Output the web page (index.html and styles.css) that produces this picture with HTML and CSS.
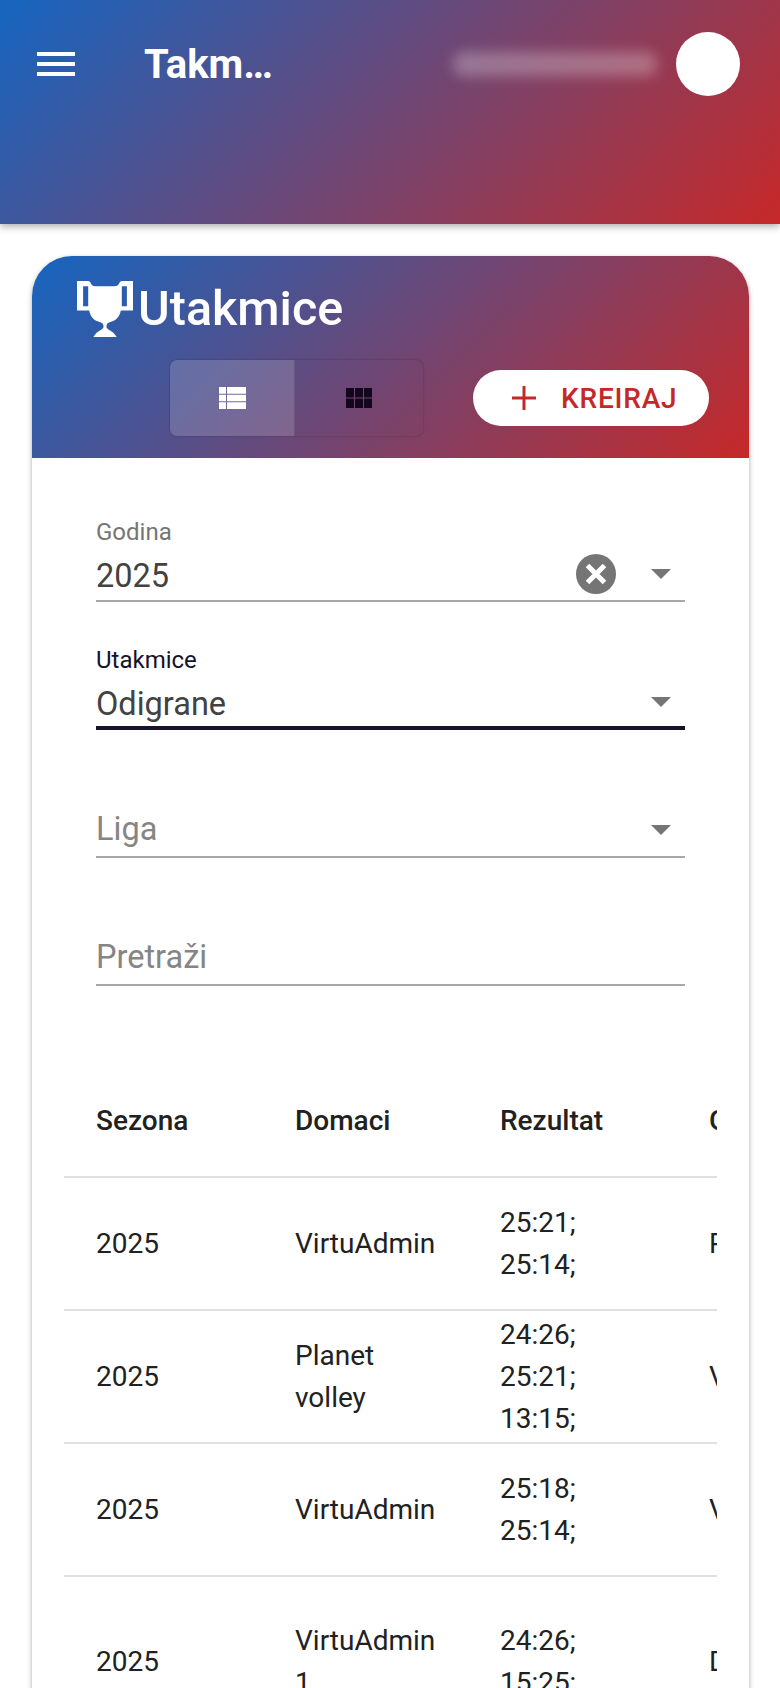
FILE: index.html
```html
<!DOCTYPE html>
<html lang="sr">
<head>
  <meta charset="UTF-8">
  <meta name="viewport" content="width=device-width, initial-scale=1.0">
  <title>Utakmice</title>
  <link rel="stylesheet" href="styles.css">
</head>
<body>
  <header class="topbar">
    <button class="menu-button" aria-label="Meni">
      <span></span><span></span><span></span>
    </button>
    <div class="topbar-title">Takm…</div>
    <div class="user-name"></div>
    <div class="avatar"></div>
  </header>

  <main class="page">
    <section class="card">
      <div class="card-head">
        <h1 class="card-title">
          <svg class="trophy" viewBox="0 0 55 53" preserveAspectRatio="none" aria-hidden="true">
            <path fill-rule="evenodd" d="M0 0H11Q13 0 14 3Q15 5 18 5H37Q40 5 41 3Q42 0 44 0H55V28H43C42 34 38 38 32 39Q29 40 29 42V44Q30 46 33 47Q37 49 39 53H16Q18 49 22 47Q25 46 26 44V42Q26 40 23 39C17 38 13 34 12 28H0ZM6 5V24H11V5ZM44 5V24H49V5Z"/>
          </svg>
          Utakmice
        </h1>
        <div class="head-actions">
          <div class="view-toggle">
            <button class="toggle-item active" aria-label="Lista">
              <svg viewBox="0 0 27 22" width="27" height="22"><path d="M0 0h7v6.700H0zM8 0h19v6.700H8zM0 7.700h7v6.600H0zM8 7.700h19v6.600H8zM0 15.300h7V22H0zM8 15.300h19V22H8z"/></svg>
            </button>
            <button class="toggle-item" aria-label="Mreža">
              <svg viewBox="0 0 26 20" width="26" height="20"><path d="M0 0h8v9.500H0zM9 0h8v9.500H9zM18 0h8v9.500h-8zM0 10.500h8V20H0zM9 10.500h8V20H9zM18 10.500h8V20h-8z"/></svg>
            </button>
          </div>
          <button class="create-button">
            <svg viewBox="0 0 24 24" width="24" height="24"><path d="M10.500 0h3v10.500H24v3H13.500V24h-3V13.500H0v-3h10.500z"/></svg>
            KREIRAJ
          </button>
        </div>
      </div>

      <div class="card-body">
        <div class="filters">
          <div class="field">
            <label class="field-label">Godina</label>
            <div class="field-row">
              <span class="field-value">2025</span>
              <span class="clear-icon">
                <svg viewBox="0 0 40 40" width="40" height="40"><circle cx="20" cy="20" r="20" fill="#757575"/><path d="M11.500 11.500l17 17m0-17l-17 17" stroke="#fff" stroke-width="5" fill="none"/></svg>
              </span>
              <span class="arrow"></span>
            </div>
          </div>
          <div class="field focused">
            <label class="field-label">Utakmice</label>
            <div class="field-row">
              <span class="field-value">Odigrane</span>
              <span class="arrow"></span>
            </div>
          </div>
          <div class="field">
            <div class="field-row">
              <span class="field-value placeholder">Liga</span>
              <span class="arrow"></span>
            </div>
          </div>
          <div class="field">
            <div class="field-row">
              <span class="field-value placeholder">Pretraži</span>
            </div>
          </div>
        </div>

        <div class="table-wrap">
          <table class="matches">
            <thead>
              <tr>
                <th class="col-season">Sezona</th>
                <th class="col-home">Domaci</th>
                <th class="col-result">Rezultat</th>
                <th>Gosti</th>
              </tr>
            </thead>
            <tbody>
              <tr>
                <td>2025</td>
                <td>VirtuAdmin</td>
                <td>25:21;<br>25:14;</td>
                <td>Partizan</td>
              </tr>
              <tr>
                <td>2025</td>
                <td>Planet<br>volley</td>
                <td>24:26;<br>25:21;<br>13:15;</td>
                <td>VirtuAdmin</td>
              </tr>
              <tr>
                <td>2025</td>
                <td>VirtuAdmin</td>
                <td>25:18;<br>25:14;</td>
                <td>Vizura</td>
              </tr>
              <tr class="tall-row">
                <td>2025</td>
                <td>VirtuAdmin<br>1</td>
                <td>24:26;<br>15:25;</td>
                <td>Dorćol</td>
              </tr>
            </tbody>
          </table>
        </div>
      </div>
    </section>
  </main>
</body>
</html>
```

FILE: styles.css
```css
html, body {
  height: 1688px;
  overflow: hidden;
}

body {
  margin: 0;
  background: #fff;
  font-family: Roboto, "Liberation Sans", sans-serif;
  color: #212121;
}

button {
  border: none;
  padding: 0;
  font-family: inherit;
  cursor: pointer;
}

.topbar {
  display: flex;
  align-items: flex-start;
  height: 224px;
  padding: 32px 40px 0 37px;
  box-sizing: border-box;
  background: linear-gradient(135deg, #1565c0, #c62828);
  box-shadow: 0 3px 7px rgba(0, 0, 0, 0.3);
}

.menu-button {
  display: flex;
  flex-direction: column;
  justify-content: space-between;
  width: 38px;
  height: 24px;
  margin-top: 20px;
  background: none;
}

.menu-button span {
  height: 4px;
  background: #fff;
}

.topbar-title {
  width: 306px;
  margin-left: 69px;
  color: #fff;
  font-size: 40px;
  font-weight: 700;
  line-height: 66px;
}

.user-name {
  width: 204px;
  height: 24px;
  margin: 20px 19px 0 3px;
  border-radius: 10px;
  background: rgba(255, 255, 255, 0.28);
  filter: blur(7px);
}

.avatar {
  width: 64px;
  height: 64px;
  border-radius: 50%;
  background: #fff;
}

.page {
  padding: 32px 31px 0 32px;
}

.card {
  border-radius: 40px 40px 0 0;
  background: #fff;
  box-shadow: 0 2px 5px rgba(0, 0, 0, 0.35);
}

.card-head {
  height: 202px;
  padding-top: 25px;
  box-sizing: border-box;
  border-radius: 40px 40px 0 0;
  background: linear-gradient(135deg, #1565c0, #c62828);
}

.card-title {
  display: flex;
  align-items: center;
  margin: 0 0 0 45px;
  color: #fff;
  font-size: 48.500px;
  font-weight: 500;
  line-height: 56px;
}

.trophy {
  width: 56px;
  height: 56px;
  margin-right: 5px;
  fill: #fff;
}

.head-actions {
  display: flex;
  align-items: flex-start;
  margin: 23px 0 0 138px;
}

.view-toggle {
  display: flex;
  height: 76px;
  border-radius: 7px;
  box-shadow: 0 0 2px rgba(0, 0, 0, 0.3);
}

.toggle-item {
  display: flex;
  align-items: center;
  justify-content: center;
  width: 125px;
  background: transparent;
  fill: #12071c;
}

.toggle-item:first-child {
  border-right: 1px solid rgba(0, 0, 0, 0.15);
  border-radius: 7px 0 0 7px;
}

.toggle-item:last-child {
  width: 128px;
}

.toggle-item.active {
  background: rgba(255, 255, 255, 0.16);
  fill: #fff;
}

.create-button {
  display: flex;
  align-items: center;
  gap: 25px;
  width: 236px;
  height: 56px;
  margin: 10px 0 0 50px;
  padding-left: 39px;
  box-sizing: border-box;
  border-radius: 28px;
  background: #fff;
  color: #c62828;
  fill: #c62828;
  font-size: 28px;
  font-weight: 500;
  letter-spacing: 0.8px;
}

.card-body {
  padding: 16px 32px 0;
}

.filters {
  padding: 0 32px 78px;
}

.field {
  display: flex;
  flex-direction: column;
  justify-content: flex-end;
  height: 128px;
  box-sizing: border-box;
  border-bottom: 2px solid #a8a8a8;
}

.field.focused {
  border-bottom: 4px solid #14132a;
}

.field.focused .field-row {
  margin-bottom: -2px;
}

.field.focused .field-label {
  color: #14132a;
}

.field-label {
  margin-bottom: 1px;
  color: #757575;
  font-size: 24px;
  line-height: 30px;
}

.field-row {
  display: flex;
  align-items: center;
  height: 52px;
}

.field-value {
  flex: 1;
  padding-top: 3px;
  color: #424242;
  font-size: 32.500px;
}

.field-value.placeholder {
  padding-top: 0;
  padding-bottom: 2px;
  color: #858585;
}

.clear-icon {
  display: flex;
  margin-right: 35px;
}

.arrow {
  width: 0;
  height: 0;
  margin-right: 14px;
  border-left: 10px solid transparent;
  border-right: 10px solid transparent;
  border-top: 10px solid #757575;
}

.table-wrap {
  overflow: hidden;
}

.matches {
  width: 900px;
  border-collapse: collapse;
  table-layout: fixed;
  font-size: 28px;
}

.matches th {
  height: 112px;
  padding: 0;
  text-align: left;
  font-size: 28px;
  font-weight: 500;
}

.matches td {
  box-sizing: border-box;
  height: 133px;
  padding: 2px 0;
  line-height: 42px;
}

.matches .tall-row td {
  height: 170px;
}

.matches tr {
  border-bottom: 2px solid #e0e0e0;
}

.matches tbody tr:last-child {
  border-bottom: none;
}

.matches th:first-child,
.matches td:first-child {
  padding-left: 32px;
}

.col-season {
  width: 199px;
}

.col-home {
  width: 205px;
}

.col-result {
  width: 209px;
}
```
